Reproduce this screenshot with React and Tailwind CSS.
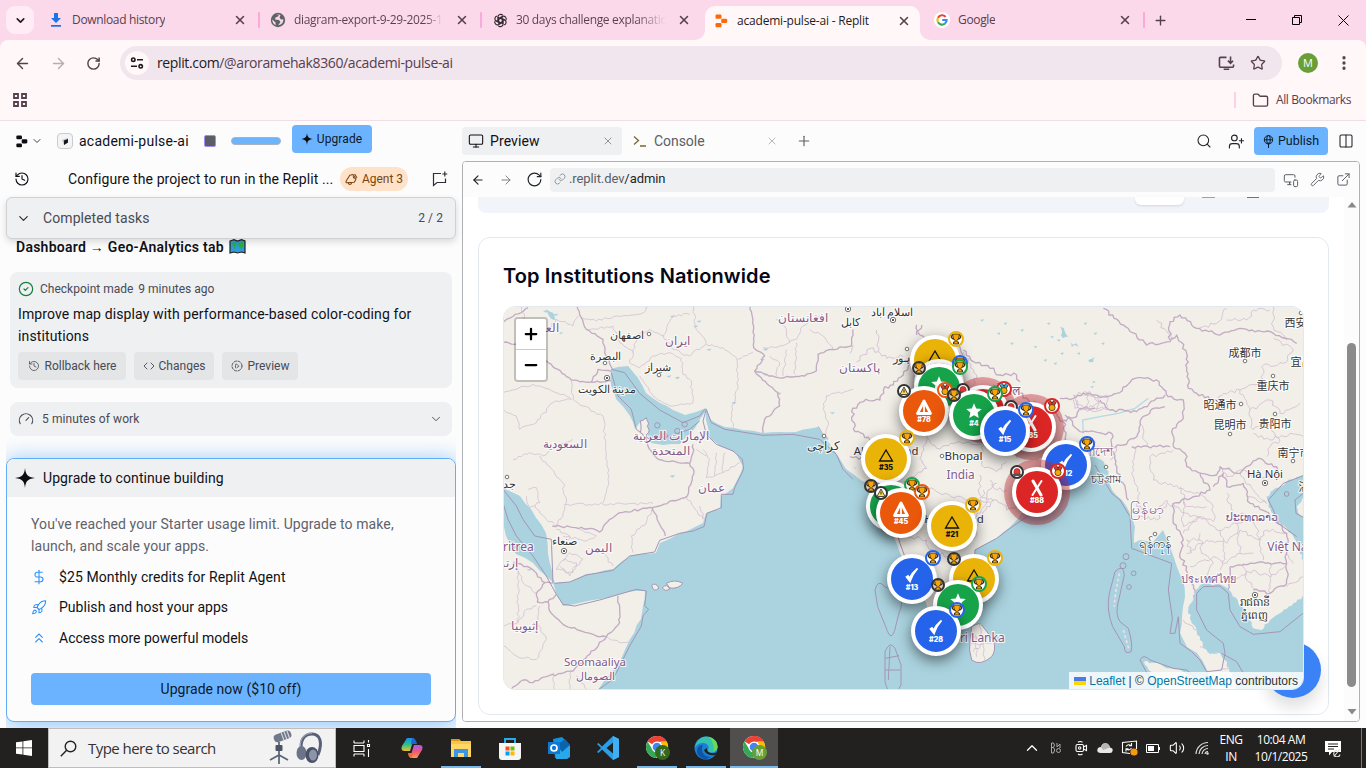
import React from 'react';
import {
  ArrowLeft, ArrowRight, RotateCw, ChevronDown, ChevronUp, ChevronsUp, X, Plus, Minus, Star, Folder, History,
  CircleCheck, Code, CirclePlay, Gauge, DollarSign, Rocket, Monitor, Search, UserPlus,
  Columns2, Link, MonitorSmartphone, Wrench, ExternalLink, EllipsisVertical, Volume2,
} from 'lucide-react';

/* ---------- browser chrome ---------- */

const CloseX = ({ className }) => <X className={className} width={14} height={14} strokeWidth={2.6} />;

const Tab = ({ icon, label, labelClass, className }) => (
  <div className={`flex h-6 items-center ${className}`}>
    <span className="flex w-4 shrink-0 justify-center">{icon}</span>
    <span className={`ml-2 overflow-hidden whitespace-nowrap text-[12px] ${labelClass}`}>{label}</span>
    <CloseX className="ml-auto shrink-0 text-[#57404e]" />
  </div>
);

const ReplitMark = ({ size = 16, color }) => (
  <svg width={size} height={size} viewBox="0 0 16 16" fill={color}>
    <rect x="2.5" y="1.5" width="6" height="4.2" rx="1.2" />
    <rect x="8.2" y="5.7" width="6" height="4.3" rx="1.2" />
    <rect x="2.5" y="10" width="6" height="4.2" rx="1.2" />
  </svg>
);

const GoogleG = () => (
  <svg width="16" height="16" viewBox="0 0 16 16">
    <circle cx="8" cy="8" r="8" fill="#fff" />
    <g fill="none" strokeWidth="2.2">
      <path d="M11.6 4.9A4.6 4.6 0 0 0 4 5.7" stroke="#ea4335" />
      <path d="M4 5.7a4.6 4.6 0 0 0 0 4.6" stroke="#fbbc05" />
      <path d="M4 10.3a4.6 4.6 0 0 0 7 1.2" stroke="#34a853" />
      <path d="M11 11.5A4.6 4.6 0 0 0 12.6 8H8.2" stroke="#4285f4" />
    </g>
  </svg>
);

const Globe = () => (
  <svg width="16" height="16" viewBox="0 0 16 16">
    <circle cx="8" cy="8" r="7.2" fill="#5f6368" />
    <path d="M2.2 7.5l3.3 3 .2 2.7C3.5 12.200 2.200 10 2.200 7.500zM6 2.600l3 .2-1 1.800-2.500 1L5 7.400l4 .6 1.500 2L8 13.500l3-1.200c1.700-1.300 2.600-3 2.300-5L11 7.500 9.500 5.500 10.500 3 8 2.200z" fill="#fbd9ea" />
  </svg>
);

const Knot = () => (
  <svg width="15" height="15" viewBox="0 0 16 16" fill="none" stroke="#33282f" strokeWidth="1.200">
    {[0, 60, 120, 180, 240, 300].map((a) => (
      <g key={a} transform={`rotate(${a} 8 8)`}>
        <path d="M5.200 9.300V4.200a2.900 2.900 0 0 1 5.200-1.600" />
        <path d="M5.800 7L10.300 4.300" />
      </g>
    ))}
  </svg>
);

const Sep = () => <span className="h-4 w-[2px] shrink-0 rounded bg-[#fba9dc]" />;

const TabStrip = () => (
  <div className="relative flex h-10 shrink-0 items-center bg-[#fbd9ea] font-['Open_Sans',sans-serif] tracking-[-0.33px] text-[#57404e]">
    <div className="ml-1.5 flex h-7 w-7 items-center justify-center rounded-[9px] bg-[#ffecf5]">
      <ChevronDown size={13} strokeWidth={3} className="text-[#1f1a1d]" />
    </div>
    <Tab className="ml-[14px] w-[199px]" label="Download history" icon={
      <svg width="12" height="14" viewBox="0 0 12 14" fill="#1a73e8"><path d="M4 0h4v5h3L6 10 1 5h3zM1 12h10v1.800H1z" /></svg>} />
    <span className="w-[11px]" /><Sep />
    <Tab className="ml-[10px] w-[199px]" label="diagram-export-9-29-2025-1" labelClass="w-[149px] bg-gradient-to-r from-[#57404e] from-88% to-transparent bg-clip-text text-transparent" icon={<Globe />} />
    <span className="w-[11px]" /><Sep />
    <Tab className="ml-[10px] w-[199px]" label="30 days challenge explanation" labelClass="w-[150px] bg-gradient-to-r from-[#57404e] from-80% to-transparent bg-clip-text text-transparent" icon={<Knot />} />
    <div className="relative ml-[14px] h-[34px] w-[215px] self-end rounded-t-[10px] bg-[#fff7f8] pt-0.5">
      <Tab className="mt-[1px] ml-2 w-[198px] text-[#1f1a1d]" label="academi-pulse-ai - Replit" labelClass="tracking-[-0.2px]" icon={<ReplitMark size={16} color="#fa6a0a" />} />
      <span className="absolute bottom-0 -left-[10px] h-[10px] w-[10px] overflow-hidden"><span className="block h-[10px] w-[10px] rounded-br-[10px] shadow-[5px_5px_0_5px_#fff7f8]" /></span>
      <span className="absolute -right-[10px] bottom-0 h-[10px] w-[10px] overflow-hidden"><span className="block h-[10px] w-[10px] rounded-bl-[10px] shadow-[-5px_5px_0_5px_#fff7f8]" /></span>
    </div>
    <Tab className="ml-[14px] w-[198px]" label="Google" icon={<GoogleG />} />
    <span className="w-[11px]" /><Sep />
    <Plus size={15} strokeWidth={2.200} className="ml-[8px]" />
    <div className="ml-auto flex items-center text-black">
      <svg width="10" height="10" viewBox="0 0 10 10" stroke="#000"><path d="M0 4.500h10" /></svg>
      <svg width="10" height="10" viewBox="0 0 10 10" fill="none" stroke="#000" className="ml-9"><path d="M.5 2.500h7v7h-7zM2.500 2.500v-2h7v7h-2" /></svg>
      <svg width="11" height="11" viewBox="0 0 11 11" fill="none" stroke="#000" className="mr-[17px] ml-9"><path d="M.5.5l10 10M10.500.5l-10 10" /></svg>
    </div>
  </div>
);

const Toolbar = () => (
  <div className="shrink-0 bg-[#fbd9ea]">
    <div className="flex h-[46px] items-center rounded-t-[8px] bg-[#fff7f8] font-['Open_Sans',sans-serif] text-[#57404e]">
      <ArrowLeft size={17} strokeWidth={2} className="ml-[14px]" />
      <ArrowRight size={17} strokeWidth={2} className="ml-[19px] text-[#b9adb3]" />
      <RotateCw size={15} strokeWidth={2.300} className="ml-[19px]" />
      <div className="ml-[19px] flex h-[34px] w-[1162px] items-center rounded-full bg-[#f1e5ee] pl-[5px]">
        <span className="flex h-6 w-6 items-center justify-center rounded-full bg-[#fff7f8]">
          <svg width="14" height="14" viewBox="0 0 14 14" fill="none" stroke="#1f1a1d" strokeWidth="1.600"><circle cx="3.300" cy="3.700" r="1.700" /><path d="M7 3.700h6M1 10.300h6" /><circle cx="10.700" cy="10.300" r="1.700" /></svg>
        </span>
        <span className="ml-2 pb-px text-[14px] tracking-[-0.37px] whitespace-nowrap text-[#57404e]"><span className="text-[#1f1a1d]">replit.com</span>/@aroramehak8360/academi-pulse-ai</span>
        <svg width="17" height="15" viewBox="0 0 18 16" fill="none" stroke="#57404e" strokeWidth="1.700" className="ml-auto"><path d="M9 1.500H2.500a1 1 0 0 0-1 1v8.500a1 1 0 0 0 1 1h13a1 1 0 0 0 1-1V9M6 14.200h6M13.300.5v7M10.500 5l2.800 2.800L16 5" /></svg>
        <Star size={16} strokeWidth={1.900} className="mr-4 ml-[15px]" />
      </div>
      <span className="ml-4 flex h-5 w-5 items-center justify-center rounded-full bg-[#689f38] text-[11px] text-white">M</span>
      <EllipsisVertical size={18} strokeWidth={2.400} className="ml-[17px]" />
    </div>
    <div className="flex h-[35px] items-center border-b border-[#f0dde5] bg-[#fff7f8] pb-1.5 font-['Open_Sans',sans-serif] text-[#57404e]">
      <svg width="14" height="14" viewBox="0 0 14 14" fill="none" stroke="#57404e" strokeWidth="1.800" className="ml-[13px]"><path d="M1 1h4v4H1zM9 1h4v4H9zM1 9h4v4H1zM9 9h4v4H9z" /></svg>
      <span className="ml-auto h-4 w-[2px] bg-[#fdd0ea]" />
      <Folder size={17} strokeWidth={1.900} className="ml-4" />
      <span className="mr-[15px] ml-[7px] text-[12px] tracking-[-0.38px]">All Bookmarks</span>
    </div>
  </div>
);

/* ---------- left panel ---------- */

const Spark = ({ size }) => (
  <svg width={size} height={size} viewBox="0 0 20 20" fill="#0b0d12"><path d="M10 0c.7 6.200 2 9 10 10-8 1-9.300 3.800-10 10-.7-6.200-2-9-10-10 8-1 9.300-3.800 10-10z" /></svg>
);

const AgentIcon = () => (
  <svg width="13" height="13" viewBox="0 0 13 13" fill="none" stroke="#7a4410" strokeWidth="1.100" strokeLinejoin="round">
    <path d="M4.800 2.200L8 1.500 11 6 9.300 9.200 1.200 9.800 1 8.200z" /><path d="M3.200 9.700c0 2 3.200 2.500 3.600-.2M9.600 1l2.400 3.800M8 3.400l1.500 2.400" />
  </svg>
);

const ActionButton = ({ icon, children, className }) => (
  <span className={`flex h-7 items-center justify-center gap-[5px] rounded bg-[#e4e5e7] ${className}`}>{icon}{children}</span>
);

const Perk = ({ icon, children, className }) => (
  <div className={`flex items-center text-[#0f1117] ${className}`}><span className="flex w-4 justify-center text-[#2e90fa]">{icon}</span><span className="ml-3">{children}</span></div>
);

const WorldMapEmoji = () => (
  <svg width="17" height="15" viewBox="0 0 17 15" className="ml-[5px] inline-block align-[-2px]">
    <path d="M1 2l4-1.300L8.500 2l4-1.300L16 2v12l-3.500-1L8.500 14 5 13l-4 1z" fill="#2d9be0" stroke="#222" strokeWidth="1.200" />
    <path d="M3 4l4-1 .5 3-2 1.500L6 11 4 8zM9 4l5-1v5l-2 2-2-2z" fill="#2fae3c" />
  </svg>
);

const LeftPanel = () => (
  <div className="flex w-[462px] shrink-0 flex-col text-[14px] tracking-[0.09px]">
    <div className="flex h-10 shrink-0 items-center pl-[14px]">
      <ReplitMark size={15} color="#0b0d12" />
      <ChevronDown size={12} strokeWidth={2} className="ml-[2px] text-[#3c4049]" />
      <span className="ml-[14px] flex h-4 w-4 items-center justify-center rounded border border-[#c9cbcf] bg-[#f3f4f5]">
        <svg width="8" height="9" viewBox="0 0 8 9"><path d="M1 3l6-2v4.500L3 8z" fill="#bdbfc4" /><path d="M3 3.500L7 2v3.500L3 8z" fill="#16181d" /></svg>
      </span>
      <span className="ml-1.5 tracking-[0.24px] text-[#0f1117]">academi-pulse-ai</span>
      <span className="ml-[15px] h-3 w-3 rounded-[2px] border-[1.500px] border-[#a58bf0] bg-[#5b5e66]" />
      <span className="ml-[15px] h-2 w-[50px] rounded-full border border-[#a9b3c0] bg-[#6bb5ff]" />
      <span className="mb-1 ml-[11px] flex h-7 w-20 items-center rounded bg-[#6bb3ff] pl-[9px] text-[12px] tracking-[0.1px] text-[#0b1a2b]"><Spark size={12} /><span className="ml-1">Upgrade</span></span>
    </div>
    <div className="flex h-9 shrink-0 items-center pl-[14px] text-[#0f1117]">
      <History size={16} strokeWidth={1.700} />
      <span className="ml-[38px] w-[267px] whitespace-nowrap">Configure the project to run in the Replit ...</span>
      <span className="ml-[5px] flex h-6 w-[68px] items-center justify-center gap-1 rounded-full bg-[#ffe2c7] text-[12px] tracking-[0px] text-[#7a4410]"><AgentIcon />Agent 3</span>
      <svg width="16" height="16" viewBox="0 0 16 16" fill="none" stroke="#2b2f38" strokeWidth="1.200" className="ml-6"><path d="M9 2.500H1.500v12L5 11.500h8.500V7.500M12.800.5v5M10.300 3h5" /></svg>
    </div>
    <div className="relative z-10 mr-[6px] ml-1.5 flex h-[42px] w-[450px] shrink-0 items-center rounded-md border border-[#cfd1d5] bg-[#eff0f2] pr-3 pl-[9px] text-[#474b55] shadow-[0_3px_7px_rgba(0,0,0,0.14)]">
      <ChevronDown size={15} strokeWidth={1.800} className="text-[#22252c]" />
      <span className="ml-[12px]">Completed tasks</span>
      <span className="ml-auto text-[12px]">2 / 2</span>
    </div>
    <div className="-mt-px flex h-[34px] shrink-0 items-start pl-4 font-semibold tracking-[0.26px] text-[#0f1117]"><p className="leading-[19px] whitespace-nowrap">Dashboard → Geo-Analytics tab<WorldMapEmoji /></p></div>
    <div className="ml-2.5 h-[116px] w-[442px] shrink-0 rounded-lg bg-[#eff0f2] px-2 pt-[7px] text-[#474b55]">
      <div className="flex h-5 items-center text-[12px] tracking-[0px]"><CircleCheck size={16} strokeWidth={1.800} className="mr-[6px] text-[#15803d]" />Checkpoint made<span className="ml-[5px]">9 minutes ago</span></div>
      <p className="mt-[4px] w-[410px] leading-[22px] tracking-[0.12px] text-[#0f1117]">Improve map display with performance-based color-coding for institutions</p>
      <div className="mt-[5px] flex gap-2 text-[12px] tracking-[0px]">
        <ActionButton className="w-[108px]" icon={<History size={12} strokeWidth={1.600} />}>Rollback here</ActionButton>
        <ActionButton className="w-[80px]" icon={<Code size={12} strokeWidth={1.800} />}><span className="-ml-px">Changes</span></ActionButton>
        <ActionButton className="w-[76px]" icon={<CirclePlay size={12} strokeWidth={1.800} strokeDasharray="5 3" />}>Preview</ActionButton>
      </div>
    </div>
    <div className="relative ml-2.5 mt-3.5 flex h-[34px] w-[442px] shrink-0 items-center rounded-lg bg-[#eff0f2] px-2 text-[12px] text-[#474b55]">
      <Gauge size={16} strokeWidth={1.600} /><span className="ml-2">5 minutes of work</span><ChevronDown size={14} strokeWidth={1.600} className="mr-px ml-auto" />
    </div>
    <div className="ml-1.5 h-[292px] w-[450px] shrink-0 overflow-hidden pt-[22px]">
      <div className="h-[264px] overflow-visible rounded-lg border border-[#62adf8] bg-[#fcfcfc] shadow-[0_3px_22px_2px_rgba(90,168,248,0.62)]">
        <div className="flex h-[38px] items-center rounded-t-[7px] bg-[#eff0f2] pl-2 text-[#0f1117]"><Spark size={20} /><span className="ml-2">Upgrade to continue building</span></div>
        <div className="px-6">
          <p className="mt-4 leading-[22px] text-[#5f626b]">You've reached your Starter usage limit. Upgrade to make,<br />launch, and scale your apps.</p>
          <Perk className="mt-[9px] h-[22px]" icon={<DollarSign size={16} strokeWidth={1.600} />}>$25 Monthly credits for Replit Agent</Perk>
          <Perk className="mt-[8px] h-[22px] tracking-[0.03px]" icon={<Rocket size={17} strokeWidth={1.600} />}>Publish and host your apps</Perk>
          <Perk className="mt-[9px] h-[22px] tracking-[0px]" icon={<ChevronsUp size={16} strokeWidth={1.600} />}>Access more powerful models</Perk>
          <div className="mt-6 flex h-8 items-center justify-center rounded bg-[#6bb3ff] tracking-[0.04px] text-[#0b1a2b]">Upgrade now ($10 off)</div>
        </div>
      </div>
    </div>
  </div>
);

/* ---------- map ---------- */

/* Polyline with small deterministic jitter, so borders and coasts look natural. */
const wob = (pts, amp = 5, close = false) => {
  const n = pts.trim().split(/\s+/).map((p) => p.split(',').map(Number));
  if (close) n.push(n[0]);
  let d = `M${n[0][0]},${n[0][1]}`;
  let seed = 7 + Math.abs(n[0][0] * 13 + n[0][1] * 7);
  for (let i = 1; i < n.length; i += 1) {
    const [ax, ay] = n[i - 1];
    const [bx, by] = n[i];
    const len = Math.hypot(bx - ax, by - ay);
    const steps = Math.max(1, Math.round(len / 9));
    for (let s = 1; s <= steps; s += 1) {
      seed = (seed * 16807 + 11) % 2147483647;
      const j = s === steps ? 0 : ((seed % 1000) / 500 - 1) * amp;
      const t = s / steps;
      d += `L${(ax + (bx - ax) * t - ((by - ay) / len) * j).toFixed(1)},${(ay + (by - ay) * t + ((bx - ax) / len) * j).toFixed(1)}`;
    }
  }
  return close ? `${d}Z` : d;
};

const SEA = 'fill-[#aad3df]';
const W = 'translate(503 306) scale(.33333)';
const N = 'translate(850 325) scale(.33333)';
const S = 'translate(850 470) scale(.33333)';
const E = 'translate(1040 300) scale(.33333)';

const WEST_MAJOR = [
  '222,0 235,35 250,70 300,100 305,140 330,190', '130,165 165,190 205,222 265,228 285,190 325,195', '265,228 325,225',
  '742,0 752,60 752,125 785,150 755,195 825,215 905,210 940,195 945,145 985,130 1045,120 1050,70', '755,195 800,240 825,260 830,300 785,340 778,388',
  '465,460 560,472 573,495 553,570 448,605 487,690', '148,660 270,668 290,678 320,640 350,620 448,605',
  '430,390 440,430 465,460', '570,415 570,440 560,472', '0,110 60,115 130,165', '0,50 75,5',
  '30,768 80,785 125,830 155,830', '125,830 100,862 103,888 135,888 160,865', '135,888 140,915 180,955 280,990 310,992 210,1095 130,1112 90,1130 60,1122 25,1150',
  '345,870 350,950 310,992', '945,362 975,400', '0,650 20,685 50,685 60,720',
];
const WEST_MINOR = [
  '55,0 70,60 130,80 160,40 210,60 225,30', '235,35 280,45 340,30 410,25 440,0', '250,70 330,60 350,110 390,140 400,90 440,70 480,90 510,30 560,25',
  '480,90 510,130 560,150 610,110 580,70 570,0', '390,140 380,170 410,185 450,150 500,140 530,155', '535,155 540,205 565,225 570,290 500,300 450,270 410,210',
  '610,115 660,125 700,155 705,240 685,320 690,370', '705,160 750,140', '205,225 210,280 240,300 300,330 310,440 318,510 310,560 300,590',
  '0,260 90,235 140,250 190,270 205,280', '0,310 40,330 50,370 100,350 150,290 205,280', '30,460 80,440 120,450 165,420 210,400', '110,450 180,530 190,590 180,630 155,660',
  '75,550 100,545 110,590 80,605 70,570', '95,600 130,640 155,655', '185,595 450,592', '390,740 385,690 430,650 448,605', '550,572 600,640', '605,640 590,600',
  '600,430 620,460 610,515 660,500 710,470', '640,440 635,510', '580,430 610,450', '665,440 660,500', '290,730 330,780', '230,670 280,690 250,705 180,690',
  '160,670 200,690 190,720', '180,760 220,770 210,800 160,790 200,740 240,760 200,810 170,780', '100,900 70,910 45,950 0,960', '100,862 60,830 40,770', '45,790 45,950',
  '110,900 100,950 130,1000 100,1060 40,1050 0,1020', '310,992 350,1010 400,1000', '150,1100 155,1150', '205,1095 200,1150', '220,1110 250,1150',
  '780,125 830,120 880,100 900,60 950,30', '840,210 850,130', '880,110 875,205', '820,40 850,70 860,110', '800,150 830,170 820,210', '920,70 960,90 990,130', '1050,250 970,270 960,310 975,345 965,392',
];
const IND_MAJOR = [
  '340,75 370,110 420,130 450,150 500,150 510,170', '180,105 160,150 130,180 100,195 90,225 40,230 5,260 15,320 60,345 55,400 0,395', '200,0 210,30 250,50 320,45 340,90',
  '430,180 500,200 560,240 620,265 640,290', '640,285 680,275 690,250 735,250', '215,0 200,30', '640,290 650,360 690,370', '735,350 735,430',
];
const IND_MINOR = [
  '80,15 85,80 110,100 160,95', '20,110 60,70 85,80', '230,330 260,370 330,350 420,360 470,330', '400,350 395,420 440,440 470,410', '230,340 210,400 230,430 160,470',
  '390,450 390,510 430,530', '180,470 260,500 340,520 420,530', '340,80 380,150 370,180', '10,60 0,85', '670,210 720,200 750,230 720,255 680,240 670,210', '680,370 750,365', '420,360 480,370 500,400',
];
const SOUTH_MINOR = [
  '200,110 230,140 330,150 380,140', '380,140 410,100 415,60 440,40', '380,170 410,110 440,90 470,120 500,110', '150,190 230,210 250,250 330,260', '370,210 380,180', '420,30 440,60 470,60',
  '400,60 385,110', '360,490 385,510 425,500', '370,545 400,520 390,460', '405,570 400,520', '365,520 425,520', '375,495 380,560',
];
const EAST_MAJOR = [
  '190,25 250,75 320,135 390,125 410,105 440,160 445,265 470,280 520,300', '60,295 100,295 130,280 190,290 230,280 285,235 350,240 385,290 430,300 430,355 395,395 400,440',
  '180,300 210,330 290,335 375,285', '75,345 120,395 215,400 215,440 250,435 290,410 300,365 340,325 375,320', '215,440 230,510 250,550 265,600',
  '400,440 435,460 440,500 485,520 530,525 540,500 600,520 655,475 710,500 710,525', '390,120 390,65 420,45 470,85 540,105 600,85 700,100 770,130', '480,520 510,570 460,590 400,610 400,670 430,720 420,760 455,850 465,880',
  '520,560 550,520 560,560 610,550 630,610 700,650 740,700 740,790 740,850 690,880 640,870', '570,800 640,790 740,790', '565,880 570,800', '390,440 350,440 275,440',
];
const EAST_MINOR = [
  '285,440 275,520 300,580 290,620 340,640 380,600 400,620', '400,450 330,470 340,540 400,560 480,580', '110,300 120,330 160,320 200,330', '130,285 160,290 200,285 205,320', '100,300 105,325 150,330 205,325', '145,285 140,325', '175,285 170,330',
  '640,390 630,330 600,270 550,280 520,310', '600,270 670,240 665,200 730,190 760,150 700,115', '640,390 680,370 720,420 690,440 680,470', '630,330 690,300 720,340 780,310', '640,400 690,420 750,400 790,410',
  '400,610 450,650 520,665 520,620 480,580', '430,700 480,650 530,690 590,670 640,650', '440,760 500,720 560,730 600,690 660,720 670,780', '450,800 520,770 560,790 600,760 640,760', '480,700 485,760 520,790 490,840',
  '540,690 555,760 540,810', '590,670 600,760', '580,840 640,810 690,830 735,800', '610,790 620,840 650,870', '690,790 690,880', '740,700 680,690 660,720', '540,500 560,530 610,510 650,530 700,530', '600,520 640,570 680,610 620,590',
  '480,1040 520,1060 545,1050', '430,960 470,990', '500,1000 520,1050', '540,1110 590,1110', '700,20 700,80 740,120', '470,85 530,70 560,25', '560,60 620,60 640,30 690,30', '230,440 210,480',
  '740,860 790,830', '760,790 740,760', '350,60 400,120', '420,560 440,620 500,620', '380,610 350,660 300,650', '560,580 580,640 640,650', '330,1090 420,1110 500,1160', '300,370 320,440', '430,600 430,680 480,650', '640,650 660,720', '455,760 440,720 480,720',
];

const lines = (arr, w, color, amp) => arr.map((p) => <path key={p} d={wob(p, amp)} fill="none" stroke={color} strokeWidth={w} strokeLinejoin="round" />);

const City = ({ x, y, capital }) => (
  <g><circle cx={x} cy={y} r={capital ? 2.700 : 1.800} fill="#fff" stroke="#555" strokeWidth=".8" />{capital && <circle cx={x} cy={y} r="1.100" fill="#333" />}</g>
);

const halo = 'stroke-white/80 stroke-[2px] [paint-order:stroke]';
const CITIES = [
  ['اصفهان', 627, 339, 11, 649, 334], ['البصرة', 605, 360, 11, 605, 363], ['شیراز', 658, 371, 11, 659, 375], ['مدينة الكويت', 607, 393, 11, 607, 378, 1],
  ['کراچی', 823, 450, 11.500, 824, 436], ['صنعاء', 564, 545, 11, 564, 551, 1], ['جد', 509, 488, 11, 507, 477], ['اسلام آباد', 892, 316, 11, 893, 320, 1], ['کابل', 850, 326, 11, 848, 309, 1],
  ['لاہور', 904, 362, 11, 907, 349], ['Ahmedabad', 886, 455, 11.300], ['Bhopal', 963.500, 460, 11.500, 942, 456], ['Hyderabad', 954, 523, 11.500], ['成都市', 1245, 357, 11, 1245, 361], ['重庆市', 1273, 390, 11, 1273, 376],
  ['西安市', 1301, 327, 11, 1301, 313], ['宜昌市', 1307, 366, 11], ['昭通市', 1220, 409, 11, 1241, 404], ['昆明市', 1230, 429, 11, 1230, 434], ['贵阳市', 1275, 428, 11, 1275, 414], ['南宁市', 1294, 457, 11, 1293, 461],
  ['Hà Nội', 1265, 478, 11.300, 1265, 483, 1], ['চট্টগ্রাম', 1106, 483, 11.300, 1106, 467], ['ရန်ကုန်', 1155, 548, 12.500, 1155, 534], ['រាជធានី', 1255, 606, 11, 1255, 595, 1], ['ភ្នំពេញ', 1254, 619, 10.500], ['湛江市', 1315, 491, 11],
];
const COUNTRIES = [
  ['العراق', 543, 332, 12], ['ایران', 677, 345, 12], ['افغانستان', 803, 322, 12], ['پاکستان', 859, 372, 12], ['السعودية', 565, 448, 12], ['الإمارات العربية', 671, 440, 12], ['المتحدة', 671, 455, 12],
  ['عمان', 711, 492, 12], ['اليمن', 598, 552, 12], ['Eritrea', 515, 551, 12], ['إرتريا', 505, 567, 12], ['إثيوبيا', 524, 630, 12], ['Soomaaliya', 595, 666, 11.500], ['الصومال', 595, 680, 11],
  ['India', 960.500, 479, 11.800], ['Sri Lanka', 979, 642, 12], ['বাংলাদেশ', 1090, 456, 12], ['नेपाल', 1008, 395, 12], ['မြန်မာ', 1147, 514, 14], ['ປະເທດລາວ', 1252, 521, 10.500], ['Việt Nam', 1293, 551, 12], ['ประเทศไทย', 1208, 583, 10.800],
];

const MapTiles = () => (
  <svg width="799" height="382" viewBox="504 307 799 382" className="block font-['Noto_Sans','Noto_Sans_CJK_SC',sans-serif]">
    <rect x="503" y="306" width="802" height="385" fill="#f2efe9" />
    <g transform={E} className="fill-[#aad3df]">
      <path d={wob('60,80 75,95 85,110 70,115', 5, true)} /><path d={wob('90,125 110,130 115,142 95,140', 7, true)} /><path d={wob('145,180 165,170 160,186 148,187', 3, true)} />
      {[[20, 70], [50, 120], [130, 70], [160, 100], [10, 180], [60, 160], [150, 260], [155, 245], [30, 110], [110, 160], [40, 190], [183, 130], [-60, 90], [-110, 70], [-90, 130], [-130, 100], [-20, 140], [-180, 60]].map(([x, y]) => <path key={`${x}-${y}`} d={wob(`${x},${y} ${x + 11},${y - 3} ${x + 8},${y + 5}`, 2, true)} />)}
      <path d="M130,400L128,360L180,350L235,340L285,325L325,295" fill="none" stroke="#b5d9e3" strokeWidth="4" />
    </g>
    <g transform={W} className="fill-[#aad3df]">
      {[[150, 25], [120, 15], [165, 80], [500, 30], [580, 45], [570, 60], [490, 210], [515, 215], [770, 160], [780, 205], [820, 262], [685, 290], [470, 195], [500, 510], [610, 130], [780, 130], [980, 320], [70, 790]].map(([x, y]) => <path key={`${x}-${y}`} d={wob(`${x},${y} ${x + 16},${y - 2} ${x + 9},${y + 5}`, 2, true)} />)}
      <path d={wob('130,10 150,20 158,42 145,38', 2, true)} />
    </g>
    <g>
      <g transform={W}>{lines(WEST_MINOR, 2.400, '#d2c0d2', 4)}{lines(WEST_MAJOR, 4, '#c3abc4', 3)}</g>
      <g transform={N}>{lines(IND_MINOR, 2.400, '#cdbacd', 6)}{lines(IND_MAJOR, 4, '#c3abc4', 7)}</g>
      <g transform={S}>{lines(SOUTH_MINOR, 2.400, '#cdbacd', 7)}</g>
      <g transform={E}>{lines(EAST_MINOR, 2.400, '#d0bdd0', 6)}{lines(EAST_MAJOR, 4, '#c3abc4', 5)}</g>
    </g>
    {/* Arabian Sea, Gulf and Bay of Bengal share one outline in page coordinates */}
    <path className={SEA} d={wob('611,369 618,367 628,366 638,378 646,393 660,403 673,410 685,415 696,412 706,408 711,420 725,427 743,430 763,433 780,432 796,432 818,427 825,437 831,446 838,456 846,469 853,474 858,471 853,467 862,470 865,479 869,481 872,477 875,490 870,507 874,522 894,537 898,547 904,560 912,577 917,583 925,600 932,617 936,620 944,617 952,612 955,606 968,603 973,593 973,580 975,550 983,545 997,538 1010,527 1022,513 1035,506 1060,485 1075,481 1085,470 1083,457 1093,459 1107,477 1112,490 1122,500 1130,513 1135,527 1134,543 1140,540 1153,542 1163,530 1170,547 1177,567 1183,580 1185,597 1182,617 1180,633 1187,647 1197,653 1207,670 1213,690 598,690 621,659 630,639 641,619 643,606 645,591 635,591 618,595 600,599 575,604 563,606 556,593 553,582 546,576 533,563 516,554 506,536 503,523 503,488 520,496 531,509 546,533 548,553 553,579 555,583 570,582 586,574 613,569 630,556 656,553 660,543 680,533 693,528 703,523 706,513 720,509 721,496 733,488 743,466 736,453 720,446 708,436 706,411 700,419 690,434 680,444 663,445 651,443 646,431 641,421 635,429 630,416 616,399 611,386', 0.9, true)} />
    <g transform={W} fill="none" stroke="#a395b3" strokeWidth="3">
      <path d="M155,832L200,828L250,807L330,793L380,750L455,738L470,703L530,682L570,675L603,662L612,622L655,605L655,565L690,565L695,545L722,490L718,460L690,435L640,415L610,385L600,345L610,310L625,350L665,370L780,388L870,385L950,400L1000,445L1020,490L1050,520M325,190L365,200L410,262L470,312L540,350L590,330L605,310M325,200L345,270L385,310L400,370L440,400L500,390L560,370L590,345M0,550L40,600L60,640L95,690L145,700L150,830M0,590L15,640L40,690L90,750L130,810L160,865L180,895L215,900L290,882L400,850L430,855L425,900L437,910L420,930L415,960L380,1020L355,1070L330,1120L285,1152" strokeLinejoin="round" />
      <path fill="#f2efe9" d="M490,832q25,-14 50,0q-15,18 -40,14zM478,845q14,-14 22,4q-14,10 -22,-4zM446,838q12,-10 22,8q-16,16 -22,-8z" />
      <path fill="#f2efe9" d={wob('412,345 430,335 438,370 430,395 412,380', 3, true)} />
      <circle cx="463" cy="358" r="8" /><circle cx="523" cy="375" r="8" /><circle cx="545" cy="355" r="8" /><circle cx="485" cy="390" r="8" />
    </g>
    <path d={wob('853,474 860,462 875,463 885,470 883,480 872,484 862,481', 0.8, true)} fill="#f2efe9" />
    <g transform={S} fill="none" stroke="#a395b3" strokeWidth="3" strokeLinejoin="round">
      <path d="M75,360q8,-35 30,-10l45,25q10,30 -2,50l-15,60q-10,25 -20,0l-30,-75z" />
      <path d="M105,545q15,-35 30,-10l18,50v60q-30,60 -48,-10zM107,565l40,-8M120,530l-5,100M105,600h45" />
      <path fill="#f2efe9" d="M365,470Q390,455 395,465L430,510Q440,540 425,560Q390,590 365,570Q355,540 360,510z" />
      <path d="M120,120L150,220L190,330L230,390M370,330L375,240L440,205L480,175L560,120L640,70M300,490q-30,25 -60,-30" />
    </g>
    <g transform={S}>{lines(SOUTH_MINOR.slice(-5), 2.200, '#cdbacd', 5)}</g>
    <g transform={E}>
      <path className={SEA} d={wob('465,880 480,855 500,850 545,855 575,880 595,910 625,940 640,985 665,990 690,960 720,940 760,910 795,885 795,1170 590,1170 575,1120 555,1080 540,1060 510,1062 490,1045 480,1010 455,970 445,930', 4, true)} />
      <path className={SEA} d={wob('795,525 740,545 700,570 680,590 685,620 720,670 760,710 780,760 795,790', 4, true)} />
      <path className={SEA} d={wob('150,465 185,480 215,540 200,530 165,500', 4, true)} />
      <path fill="#f2efe9" d={wob('312,1085 345,1088 380,1105 430,1115 470,1150 500,1172 370,1172 345,1140', 4, true)} />
      <path fill="#f2efe9" d={wob('795,590 770,620 780,645 795,650', 3, true)} />
      <path fill="none" stroke="#a395b3" strokeWidth="3" strokeLinejoin="round" d="M165,495L215,580L240,600L270,650L275,745L395,790L385,870L397,955L390,1000L405,1000L415,950L420,1030L455,1055L480,1080L500,1115L545,1110L555,1060L550,1030L500,990L470,930L470,880L490,860M490,860L540,858L565,880L570,930L600,980L640,1003L720,995L795,935M795,525L730,550L685,600L700,630L715,670L770,710M740,582m-7,0a7,7 0 1 0 14,0a7,7 0 1 0 -14,0M790,580L765,600L768,640L795,655M300,1080Q310,1060 330,1080L400,1105L440,1110L490,1150M300,1080L345,1165M545,1060L590,1085L610,1120" />
      <path fill="none" stroke="#a395b3" strokeWidth="3" d="M225,815q25,-25 28,10l-18,80q-10,40 5,60l25,20q15,50 8,70q-20,10 -20,-15l-35,-60q-20,-50 -10,-100z" />
      <circle cx="258" cy="770" r="9" fill="none" stroke="#a395b3" strokeWidth="3" /><circle cx="249" cy="797" r="9" fill="none" stroke="#a395b3" strokeWidth="3" /><circle cx="281" cy="820" r="7" fill="none" stroke="#a395b3" strokeWidth="3" /><circle cx="267" cy="861" r="7" fill="none" stroke="#a395b3" strokeWidth="3" />
      <path fill="none" stroke="#eedfe6" strokeWidth="5" strokeDasharray="9 7" d="M238,820L228,870L222,920M250,990L266,1045" />
    </g>
    <g textAnchor="middle">
      {CITIES.map(([t, x, y, s, cx, cy, cap]) => (
        <g key={t}><text x={x} y={y} fontSize={s} fill="#333" className={halo}>{t}</text>{cx && <City x={cx} y={cy} capital={cap} />}</g>
      ))}
      {COUNTRIES.map(([t, x, y, s]) => <text key={t} x={x} y={y} fontSize={s} fill="#83598a" className={halo}>{t}</text>)}
    </g>
  </svg>
);

const KIND = {
  red: 'bg-[#dc2626]', green: 'bg-[#16a34a]', blue: 'bg-[#2563eb]', yellow: 'bg-[#eab308]', orange: 'bg-[#ea580c]',
};
const RING = {
  red: 'border-[#dc2626]', green: 'border-[#16a34a]', blue: 'border-[#2563eb]', yellow: 'border-[#eab308]', orange: 'border-[#ea580c]', dark: 'border-[#333]',
};

const Glyph = ({ kind }) => (
  <svg width="18" height="18" viewBox="0 0 18 18" fill="none" stroke="#fff" strokeWidth="2">
    {kind === 'red' && <g strokeLinecap="round"><path d="M5 2l8 14" strokeWidth="3" /><path d="M13.500 2L4.500 16" strokeWidth="2" /></g>}
    {kind === 'blue' && <path d="M3.500 11L7 15.500Q9.500 8 14.500 2.500Q9 7 6.600 12.200L5 10z" fill="#fff" strokeWidth="1.700" />}
    {kind === 'green' && <path d="M9 1.200l2.200 5.200 5.600.5-4.200 3.700 1.200 5.500L9 13.300l-4.800 2.800 1.200-5.500L1.200 6.900l5.600-.5z" fill="#fff" stroke="none" />}
    {kind === 'yellow' && <path d="M9 4L15.500 15H2.500z" stroke="#111" strokeWidth="1.300" />}
    {kind === 'orange' && <g><path d="M9 3L15.500 15.500H2.500z" strokeLinejoin="round" strokeWidth="2.800" /><path d="M9 5v10" strokeWidth="1.800" /></g>}
  </svg>
);

const Trophy = () => (
  <svg width="12" height="12" viewBox="0 0 12 12">
    <path d="M3 2.200H1Q1 5.500 4 6.200M9 2.200h2Q11 5.500 8 6.200" fill="none" stroke="#3b2806" strokeWidth="1.200" />
    <path d="M2.600 1h6.800Q9.600 6 7 7.300V9h1.500v2h-5V9H5V7.300Q2.400 6 2.600 1z" fill="#f5a50a" stroke="#3b2806" strokeWidth=".9" />
  </svg>
);
const Medal = ({ ribbon = '#e23b2e' }) => (
  <svg width="12" height="12" viewBox="0 0 12 12">
    <path d="M1 .5h3.500L6 3.500 7.500.5H11L8 6H4z" fill={ribbon} stroke="#3b1a10" strokeWidth=".8" /><circle cx="6" cy="7.600" r="3.100" fill="#f5a80c" stroke="#4a3208" strokeWidth=".8" />
  </svg>
);
const Warn = () => <svg width="10" height="10" viewBox="0 0 10 10"><path d="M5 1l4 7.500H1z" fill="#fde047" stroke="#222" strokeWidth=".8" /><path d="M5 3.500v3" stroke="#222" /></svg>;
const Siren = () => <svg width="10" height="10" viewBox="0 0 10 10"><path d="M2 7V4.500a3 3 0 0 1 6 0V7z" fill="#ef3a3a" stroke="#8a1c1c" strokeWidth=".6" /><path d="M.5 7h9v2h-9z" fill="#555" /></svg>;
const BADGE = { trophy: <Trophy />, medal: <Medal />, silver: <Medal ribbon="#38a9d6" />, warn: <Warn />, siren: <Siren /> };

const Badge = ({ x, y, ring, type, small }) => (
  <span className={`absolute flex -translate-x-1/2 -translate-y-1/2 items-center justify-center overflow-hidden rounded-full border-2 ${small ? 'h-[14px] w-[14px]' : 'h-4 w-4'} ${ring === 'dark' && type === 'trophy' ? 'bg-[#d6cdbf]' : 'bg-white'} ${RING[ring]}`} style={{ left: x, top: y }}><span className="shrink-0">{BADGE[type]}</span></span>
);

const PINS = [
  { x: 935, y: 360, kind: 'yellow', right: 'trophy', label: '#30' },
  { x: 939, y: 384, kind: 'blue', right: 'trophy', label: '#9' },
  { x: 939, y: 388, kind: 'green', right: 'trophy', left: 'trophy', label: '#2' },
  { x: 983, y: 410, kind: 'red', right: 'silver', left: 'siren', label: '#90', pulse: true },
  { x: 924, y: 411, kind: 'orange', right: 'medal', left: 'warn', label: '#78' },
  { x: 974, y: 415, kind: 'green', right: 'trophy', left: 'trophy', label: '#4' },
  { x: 1031, y: 427, kind: 'red', right: 'medal', left: 'siren', label: '#85', pulse: true },
  { x: 1005, y: 431, kind: 'blue', right: 'trophy', label: '#15' },
  { x: 886, y: 459, kind: 'yellow', right: 'trophy', label: '#35' },
  { x: 1066, y: 465, kind: 'blue', right: 'trophy', label: '#12' },
  { x: 1037, y: 492, kind: 'red', right: 'medal', left: 'siren', label: '#88', pulse: true },
  { x: 891, y: 506, kind: 'green', right: 'trophy', left: 'trophy', label: '#6' },
  { x: 901, y: 513, kind: 'orange', right: 'trophy', left: 'warn', label: '#45' },
  { x: 952, y: 526, kind: 'yellow', right: 'trophy', label: '#21' },
  { x: 912, y: 579, kind: 'blue', right: 'trophy', label: '#13' },
  { x: 974, y: 579, kind: 'yellow', right: 'trophy', left: 'trophy', label: '#27' },
  { x: 958, y: 605, kind: 'green', right: 'trophy', left: 'trophy', label: '#8' },
  { x: 936, y: 631, kind: 'blue', right: 'trophy', label: '#28' },
];

const Pin = ({ x, y, kind, right, left, label, pulse }) => (
  <div className="absolute h-[50px] w-[50px]" style={{ left: x - 529, top: y - 332 }}>
    {pulse && <span className="absolute -inset-2 rounded-full bg-[#c9202c]/40" />}
    <div className={`relative flex h-[50px] w-[50px] flex-col items-center rounded-full border-4 border-white pt-[8px] shadow-[0_5px_14px_rgba(0,0,0,0.5)] ${KIND[kind]} ${kind === 'yellow' ? 'text-[#111]' : 'text-white'}`}>
      <Glyph kind={kind} />
      <span className="font-['Inter',sans-serif] text-[7px] leading-[8px] font-black">{label}</span>
    </div>
    {left && <Badge x={5} y={5} ring="dark" type={left} small />}
    <Badge x={46} y={4} ring={kind} type={right} />
  </div>
);

const MapView = () => (
  <div className="relative h-[384px] w-[801px] overflow-hidden rounded-xl border border-[#e2e8f0]">
    <MapTiles />
    {PINS.map((p) => <Pin key={`${p.x}-${p.y}`} {...p} />)}
    <div className="absolute top-[10px] left-[10px] flex w-[34px] flex-col rounded border-2 border-black/20 bg-clip-padding text-black">
      <span className="flex h-[31px] items-center justify-center rounded-t-[2px] border-b border-[#ccc] bg-white"><Plus size={18} strokeWidth={3} /></span>
      <span className="flex h-[30px] items-center justify-center rounded-b-[2px] bg-white pb-px"><Minus size={18} strokeWidth={3} /></span>
    </div>
    <div className="absolute right-0 bottom-0 flex h-[17px] items-center bg-white/80 px-[5px] font-['Liberation_Sans',Arial,sans-serif] text-[12px] whitespace-pre text-[#333]">
      <svg width="12" height="8" viewBox="0 0 12 8" className="mr-[3px]"><path fill="#4c7be1" d="M0 0h12v4H0z" /><path fill="#ffd500" d="M0 4h12v4H0z" /></svg>
      <span className="text-[#0078a8]">Leaflet</span> | © <span className="text-[#0078a8]">OpenStreetMap</span> contributors
    </div>
  </div>
);

/* ---------- preview pane ---------- */

const PublishIcon = () => (
  <svg width="11" height="13" viewBox="0 0 11 13" fill="none" stroke="#0b1a2b" strokeWidth="1"><circle cx="5.500" cy="4.800" r="4.200" /><ellipse cx="5.500" cy="4.800" rx="1.800" ry="4.200" /><path d="M1.300 4.800h8.400M5.500 9v4M5.500 7.500v2" /></svg>
);

const Preview = () => (
  <div className="flex min-w-0 flex-1 flex-col">
    <div className="flex h-10 shrink-0 items-center pr-[12px] text-[14px] text-[#5b5e66]">
      <div className="flex h-7 w-[160px] items-center rounded bg-[#eff0f2] pr-[8px] pl-1.5 text-[#0f1117]"><Monitor size={16} strokeWidth={1.600} /><span className="ml-1.5 tracking-[0.1px]">Preview</span><X size={12} strokeWidth={1.600} className="ml-auto text-[#7b7e86]" /></div>
      <svg width="14" height="14" viewBox="0 0 14 14" fill="none" stroke="#75682e" strokeWidth="1.300" className="ml-[11px]"><path d="M1 2.500l4.500 4L1 10.500M7 12h6" /></svg>
      <span className="ml-[7px] tracking-[-0.05px]">Console</span><X size={12} strokeWidth={1.500} className="ml-[61px] text-[#a0a2a8]" />
      <Plus size={16} strokeWidth={1.700} className="ml-[18px]" />
      <Search size={16} strokeWidth={1.600} className="ml-auto text-[#22252c]" /><UserPlus size={17} strokeWidth={1.600} className="ml-[16px] text-[#22252c]" />
      <span className="ml-[9px] flex h-7 w-[74px] items-center justify-center gap-1 rounded bg-[#6bb3ff] text-[12.500px] text-[#0b1a2b]"><PublishIcon />Publish</span>
      <Columns2 size={16} strokeWidth={1.600} className="ml-[10px] text-[#22252c]" />
    </div>
    <div className="flex h-[561px] w-[898px] shrink-0 flex-col overflow-hidden rounded border border-[#aeb0b3]">
      <div className="flex h-[35px] shrink-0 items-center bg-[#fcfcfc] pr-[8px] pl-2 text-[#22252c]">
        <ArrowLeft size={14} strokeWidth={2} /><ArrowRight size={14} strokeWidth={1.700} className="ml-[14px] text-[#7b7e86]" /><RotateCw size={17} strokeWidth={1.700} className="ml-[13px]" />
        <div className="ml-[7px] flex h-6 w-[727px] items-center rounded bg-[#eff0f2] pb-px pl-1 text-[13px] tracking-[-0.08px]"><Link size={12} strokeWidth={1.500} className="mr-[3px] text-[#7b7e86]" /><span className="text-[#5b5e66]">.replit.dev</span>/admin</div>
        <MonitorSmartphone size={16} strokeWidth={1.500} className="ml-[8px] text-[#5b5e66]" /><Wrench size={15} strokeWidth={1.500} className="ml-[11px] text-[#5b5e66]" /><ExternalLink size={15} strokeWidth={1.600} className="ml-[11px] text-[#5b5e66]" />
      </div>
      <div className="flex min-h-0 flex-1">
        <div className="relative w-[881px] bg-white pl-[15px]">
          <div className="flex h-4 w-[851px] rounded-b-lg bg-[#f1f5f9] pl-[657px]"><span className="h-2 w-[49px] rounded-b-md bg-white shadow-sm" /><span className="mt-0 ml-[18px] h-px w-[13px] bg-[#94a3b8]" /><span className="ml-8 h-px w-3 bg-[#64748b]" /></div>
          <div className="relative mt-[24px] h-[478px] w-[851px] rounded-xl border border-[#e2e8f0] bg-white pt-[26px] pl-6">
            <h2 className="font-['Inter',sans-serif] text-[20px] leading-6 font-semibold tracking-[0.13px] text-[#020817]">Top Institutions Nationwide</h2>
            <div className="absolute top-[404px] left-[786px] h-14 w-14 rounded-full bg-[#3b82f6] shadow-[0_10px_15px_rgba(0,0,0,0.12)]" />
            <div className="relative mt-[18px]"><MapView /></div>
          </div>
        </div>
        <div className="flex w-[15px] flex-col items-center bg-[#fcfcfc] text-[#8a8a8a]">
          <svg width="10" height="6" viewBox="0 0 10 6" className="mt-[5px]"><path d="M5 0l4.500 5.500H.5z" fill="#8a8a8a" /></svg>
          <span className="mt-[135px] h-[344px] w-[9px] rounded-full bg-[#8b8b8b]" />
          <svg width="10" height="6" viewBox="0 0 10 6" className="mt-[22px]"><path d="M5 5.500L.5 0h9z" fill="#8a8a8a" /></svg>
        </div>
      </div>
    </div>
  </div>
);

/* ---------- taskbar ---------- */

const ChromeIcon = ({ letter, tone }) => (
  <svg width="28" height="28" viewBox="0 0 28 28" className="ml-[2px]">
    <circle cx="13" cy="13" r="11" fill="#fff" />
    <path d="M13 13L3.500 7.500A11 11 0 0 1 22.600 7.500L13 7.800z" fill="#ea4335" /><path d="M13 2a11 11 0 0 1 9.600 5.500H13z" fill="#ea4335" />
    <path d="M3.500 7.500A11 11 0 0 0 12 24l5.500-8.500L8.500 15.500z" fill="#34a853" /><path d="M22.600 7.500A11 11 0 0 1 12 24l5-9 0-7.500z" fill="#fbbc05" />
    <circle cx="13" cy="13" r="5.500" fill="#fff" /><circle cx="13" cy="13" r="4.300" fill="#4285f4" />
    <circle cx="18.500" cy="18.500" r="7.500" fill={tone} /><text x="18.500" y="21.500" fontSize="8.500" textAnchor="middle" fill="#fff">{letter}</text>
  </svg>
);

const TaskApp = ({ children, open, active }) => (
  <span className={`relative flex h-10 items-center justify-center ${active ? 'w-12 bg-[#504f4d]' : 'w-[49px]'}`}>
    {children}
    {open && <span className={`absolute bottom-0 h-[2px] bg-[#76b9ed] ${active ? 'w-full' : 'w-10'}`} />}
  </span>
);

const Taskbar = () => (
  <div className="flex h-10 shrink-0 items-center bg-[#22211f] font-['Open_Sans',sans-serif] text-white">
    <span className="flex w-12 justify-center"><svg width="16" height="16" viewBox="0 0 16 16" fill="#fff"><path d="M0 2.300L6.500 1.400V7.500H0zM7.300 1.300L16 0v7.500H7.300zM0 8.300h6.500v6.300L0 13.700zM7.300 8.300H16V16l-8.700-1.300z" /></svg></span>
    <div className="mr-0.5 flex h-10 w-[288px] items-center border border-[#bdbdbd] bg-[#f2f2f2] pl-[11px] text-[#333]">
      <svg width="17" height="17" viewBox="0 0 17 17" fill="none" stroke="#222" strokeWidth="1.400"><circle cx="10.500" cy="6.500" r="5.300" /><path d="M6.600 10.300L.8 16.200" /></svg>
      <span className="ml-[11px] text-[15px] tracking-[-0.54px]">Type here to search</span>
      <svg width="60" height="38" viewBox="0 0 60 38" className="mr-[9px] ml-auto">
        <g transform="rotate(-20 15 9)"><rect x="8" y="4" width="18" height="8" rx="3.500" fill="#70788a" /><path d="M17 4v8M20 4v8M23 4v8" stroke="#d5d8df" strokeWidth="1.200" /></g>
        <path d="M13 13v13M13 26L4 31M13 26l9 5M13 25v10" stroke="#5a6274" strokeWidth="1.700" fill="none" /><rect x="9.500" y="16" width="7" height="6" rx="1" fill="#4b5365" />
        <path d="M36 23C33 12 38 5 46 5s11 8 6 21" fill="none" stroke="#596077" strokeWidth="3" /><path d="M35 22C32 12 38 4 46 4" fill="none" stroke="#a9b0c2" strokeWidth="1" />
        <ellipse cx="35.500" cy="24" rx="5" ry="7" fill="#6c7489" /><ellipse cx="46" cy="26" rx="6.500" ry="8" fill="#4b5267" /><ellipse cx="47" cy="26" rx="4" ry="5.500" fill="#8c94a8" />
      </svg>
    </div>
    <TaskApp><svg width="18" height="17" viewBox="0 0 18 17" fill="none" stroke="#fff" strokeWidth="1.100" className="mr-0.5"><path d="M1 5.500h10v6H1zM1 3V.5M11 3V.5M1 3h10M1 14v2.500M11 14v2.500M1 14h10M15.500 0v2.500M15.500 9v8M14.500 4.500h2v2h-2z" /></svg></TaskApp>
    <TaskApp>
      <svg width="24" height="24" viewBox="0 0 24 24"><defs><linearGradient id="ca" x1="0" y1="0" x2="0" y2="1"><stop stopColor="#1a8df0" /><stop offset=".5" stopColor="#2ac08c" /><stop offset="1" stopColor="#f2c12c" /></linearGradient><linearGradient id="cb" x1="0" y1="0" x2="0" y2="1"><stop stopColor="#a55bf0" /><stop offset=".5" stopColor="#f0567f" /><stop offset="1" stopColor="#f9a13e" /></linearGradient></defs>
        <path d="M7 2h7l-4 13H5Q0 15 2 10z" fill="url(#ca)" /><path d="M17 22h-7l4-13h5q5 0 3 5z" fill="url(#cb)" /><path d="M12 2q4 0 5 6h-6z" fill="#1667d9" /><path d="M12 22q-4 0-4-5h5z" fill="#f26a3c" /></svg>
    </TaskApp>
    <TaskApp open><svg width="20" height="18" viewBox="0 0 20 18"><path d="M0 0h8l2 2H20v16H0z" fill="#f7c648" /><path d="M0 0h8l1 2H0z" fill="#d99a1c" /><path d="M0 5h20v13H0z" fill="#ffd766" /><path d="M3 10h14v8h-4v-4H7v4H3z" fill="#3b97e3" /></svg></TaskApp>
    <TaskApp><svg width="22" height="23" viewBox="0 0 22 23"><path d="M6 6V2h10v4" fill="none" stroke="#2ba9e8" strokeWidth="2" /><path d="M0 6h22v14q0 3-3 3H3q-3 0-3-3z" fill="#f5f5f5" /><path d="M6.500 9.500h4v4h-4z" fill="#f25022" /><path d="M11.500 9.500h4v4h-4z" fill="#7fba00" /><path d="M6.500 14.500h4v4h-4z" fill="#00a4ef" /><path d="M11.500 14.500h4v4h-4z" fill="#ffb900" /></svg></TaskApp>
    <TaskApp><svg width="24" height="24" viewBox="0 0 24 24"><path d="M6 3l9-2 8 8-2 13H8z" fill="#1490df" /><path d="M8 10h15v11l-3 2H9z" fill="#28a8ea" /><path d="M10 9l8-6 5 6-8 7z" fill="#0a64ad" /><path d="M1 6h12v12H1z" fill="#0f78d4" /><circle cx="7" cy="12" r="3" fill="none" stroke="#fff" strokeWidth="1.700" /></svg></TaskApp>
    <TaskApp><svg width="24" height="24" viewBox="0 0 24 24"><path d="M17 0l6 3v18l-6 3L6 13.500 2.500 17 1 16l4-4-4-4 1.500-1L6 10.500zM17 6.500L10.500 12 17 17.500z" fill="#2a9fe8" /><path d="M17 0l6 3v18l-6 3z" fill="#3fb0f5" /></svg></TaskApp>
    <TaskApp open><ChromeIcon letter="K" tone="#33691e" /></TaskApp>
    <TaskApp open><svg width="24" height="24" viewBox="0 0 24 24"><circle cx="12" cy="12" r="11.500" fill="#1a7fd4" /><path d="M.8 12C2 3 9 .5 12 .5c7 0 11.500 5 11.500 10 0 4-3 6-6 6-3.500 0-4-2-3-3.500C15.500 10 13 7 9 7 5 7 2 9 .8 12z" fill="#35c1b1" /><path d="M15 1q8.500 2.500 8.500 9.500 0 4-4 5.500 2-7-4.500-15z" fill="#6bd85a" /><path d="M8 11c-1 6 3 10 9 10-8 5-14-1-14-6 0-4 3-6 6-6z" fill="#0f55a4" /><path d="M13 12q-1 6 8 5l2-1-2 3q-9 1-11-5z" fill="#22211f" /></svg></TaskApp>
    <TaskApp open active><ChromeIcon letter="M" tone="#689f38" /></TaskApp>
    <div className="ml-auto flex items-center pr-1">
      <ChevronUp size={18} strokeWidth={1.700} />
      <svg width="10" height="12" viewBox="0 0 10 12" fill="none" stroke="#aaa" strokeWidth="1" className="ml-[10px]"><path d="M.5 1v10M.5 1h2q2 2 0 4.500h-2M2.500 5.500q2.500 2 0 5.500h-2" /><circle cx="7.500" cy="8.500" r="2" /><path d="M6 1v4l3-3v4" /></svg>
      <svg width="14" height="16" viewBox="0 0 14 16" fill="none" stroke="#fff" strokeWidth="1.100" className="ml-[13px]"><rect x="2" y="4.500" width="7.500" height="7" rx="1.500" /><path d="M9.500 7l3-1.500v5l-3-1.500M4 2.200q2-1.500 4.500 0M4 14q2 1.500 4.500 0" /><circle cx="5.700" cy="8" r="1.200" /></svg>
      <svg width="16" height="12" viewBox="0 0 16 12" className="ml-[9px]"><path d="M4 11Q0 11 .3 8T4 5Q5 1 8.500 1.200T13 5.500Q16 6 15.700 8.500T13 11z" fill="#e8e8e8" /><path d="M4 5Q5 1 8.500 1.200T13 5.500L6 8z" fill="#b5b5b5" /></svg>
      <svg width="18" height="16" viewBox="0 0 18 16" fill="none" stroke="#fff" strokeWidth="1.100" className="ml-[8px]"><path d="M9 13.500L1.500 12.500V2.500L15.500 1v8" /><path d="M5 6.500q2-3 5-1M10.500 3v2.700H8M10.500 8q-2 3-5 1M5 11.500V8.800h2.500" /><circle cx="13" cy="12" r="3.600" fill="#f79a10" stroke="none" /></svg>
      <svg width="15" height="9" viewBox="0 0 15 9" className="ml-[7px]"><path d="M.5.5h12v8H.5zM13.500 3v3" fill="none" stroke="#fff" /><path d="M2 2h6v5H2z" fill="#fff" /></svg>
      <Volume2 size={16} strokeWidth={1.600} className="ml-[8px]" />
      <svg width="14" height="14" viewBox="0 0 14 14" fill="none" stroke="#ddd" strokeWidth="1.200" className="ml-[10px]"><path d="M1 13A12 12 0 0 1 13 1.500M4 13a9 9 0 0 1 9-8.500M7 13a6 6 0 0 1 6-5.500M10 13a3 3 0 0 1 3-2.500" /><circle cx="12.500" cy="12.500" r=".7" /></svg>
      <div className="ml-[9px] w-[26px] text-center text-[12px] leading-[17px] tracking-[-0.5px]">ENG<br />IN</div>
      <div className="ml-[9px] w-[56px] text-center text-[12px] leading-[17px] tracking-[-0.45px] whitespace-nowrap">10:04 AM<br />10/1/2025</div>
      <svg width="17" height="17" viewBox="0 0 17 17" className="ml-[16px]"><path d="M0 1h16v11H7l-3 3.500V12H0z" fill="#fff" /><path d="M3 4h10M3 6.500h10M3 9h6" stroke="#22211f" /><path d="M9 16.500L15 9M12 10.500a3.200 3.200 0 1 0 3 4" fill="none" stroke="#ddd" strokeWidth="1.100" /></svg>
      <span className="ml-[19px] h-10 w-px bg-[#777]" />
    </div>
  </div>
);

export default function App() {
  return (
    <div className="flex h-[768px] w-[1366px] flex-col overflow-hidden bg-[#fcfcfc]">
      <TabStrip />
      <Toolbar />
      <div className="flex h-[607px] shrink-0 font-['Roboto',sans-serif]">
        <LeftPanel />
        <Preview />
      </div>
      <Taskbar />
    </div>
  );
}
